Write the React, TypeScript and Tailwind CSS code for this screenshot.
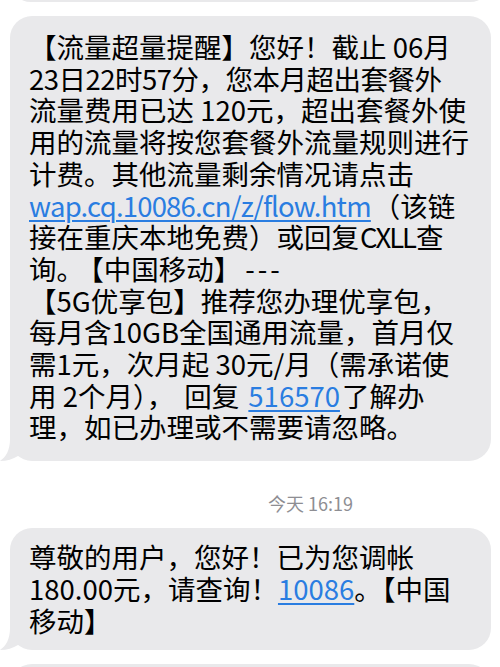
import React, { ReactNode } from 'react';

const font = { fontFamily: '"Noto Sans CJK SC", "Noto Sans", sans-serif' };

function Tail() {
    return (
        <svg
            className="absolute left-[-10px] bottom-0"
            width="30"
            height="26"
            viewBox="0 0 30 26"
        >
            <path
                d="M10 0 L10 4 C10 15 6 22 0 26 C7 26 13 24 18 21 L26 14 L26 0 Z"
                fill="#e9e9eb"
            />
        </svg>
    );
}

function Bubble({ children, className }: { children?: ReactNode; className?: string }) {
    return (
        <div
            className={
                'relative ml-[10px] w-[481px] shrink-0 rounded-[22px] bg-[#e9e9eb] pl-[19px] pr-2 text-[27.5px] leading-[31.7px] text-black ' +
                (className ?? '')
            }
        >
            {children}
            <Tail />
        </div>
    );
}

function A({ children, className }: { children: ReactNode; className?: string }) {
    return (
        <span
            className={
                'text-[#2a7de1] underline underline-offset-[3px] decoration-[1.5px] ' + (className ?? '')
            }
        >
            {children}
        </span>
    );
}

function Line({ children, className }: { children: ReactNode; className?: string }) {
    return <div className={'whitespace-nowrap ' + (className ?? '')}>{children}</div>;
}

export default function App() {
    return (
        <div className="flex h-[667px] w-[500px] flex-col overflow-hidden bg-white" style={font}>
            <div className="h-[2px] shrink-0 overflow-hidden">
                <div className="mt-[-40px] h-[42px] ml-[10px] w-[481px] rounded-[22px] bg-[#e9e9eb]" />
            </div>

            <Bubble className="mt-[14px] pt-[15px] pb-[18px]">
                <Line>【流量超量提醒】您好！截止 06月</Line>
                <Line className="tracking-[-0.5px]">23日22时57分，您本月超出套餐外</Line>
                <Line>流量费用已达 120元，超出套餐外使</Line>
                <Line>用的流量将按您套餐外流量规则进行</Line>
                <Line>计费。其他流量剩余情况请点击</Line>
                <Line>
                    <A className="tracking-[-0.8px]">wap.cq.10086.cn/z/flow.htm</A>
                    <span className="ml-[2px]">（该链</span>
                </Line>
                <Line>
                    接在重庆本地免费）或回复<span className="mx-[1px] tracking-[-2px]">CXLL</span>查
                </Line>
                <Line>
                    询。<span className="ml-[6px]">【中国移动】</span>
                    <span className="ml-[4px] tracking-[3px]">---</span>
                </Line>
                <Line>【5G优享包】推荐您办理优享包，</Line>
                <Line>每月含10GB全国通用流量，首月仅</Line>
                <Line>需1元，次月起 30元/月（需承诺使</Line>
                <Line>
                    用 2个月），<span className="ml-[10px]">回复</span> <A className="ml-[3px]">516570</A>
                    <span className="ml-[2px]">了解办</span>
                </Line>
                <Line>理，如已办理或不需要请忽略。</Line>
            </Bubble>

            <div className="mt-[31px] shrink-0 pl-[268px] text-[18px] leading-[22px] text-[#8e8e93]">
                今天 16:19
            </div>

            <Bubble className="mt-[14px] pt-[13px] pb-[14px] leading-[31.5px]">
                <Line>尊敬的用户，您好！已为您调帐</Line>
                <Line>
                    180.00元，请查询！<A>10086</A>。【中国
                </Line>
                <Line>移动】</Line>
            </Bubble>

            <Bubble className="mt-[14px] h-[60px]" />
        </div>
    );
}
